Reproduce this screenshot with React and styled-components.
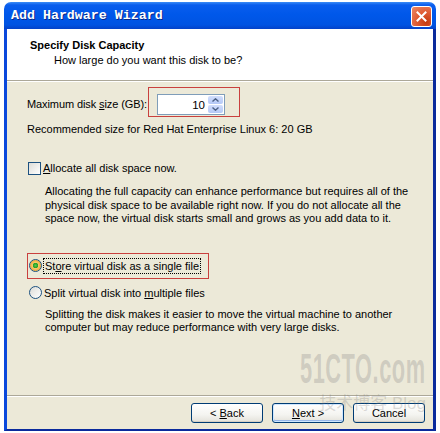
import React from 'react'
import styled, { createGlobalStyle } from 'styled-components'

const GlobalStyle = createGlobalStyle`
    html, body {
        margin: 0;
        padding: 0;
        background: #fff;
    }
    body {
        font-family: "Liberation Sans", Arial, sans-serif;
        font-size: 11px;
        color: #000;
    }
`

const Page = styled.div`
    position: relative;
    width: 440px;
    height: 433px;
    padding: 2px 0 0 4px;
    box-sizing: border-box;
    overflow: hidden;
`
const Window = styled.div`
    width: 432px;
    height: 429px;
    display: flex;
    flex-direction: column;
`
const TitleBar = styled.div`
    height: 27px;
    flex: none;
    display: flex;
    align-items: center;
    justify-content: space-between;
    padding: 0 4px 0 7px;
    border-radius: 7px 7px 0 0;
    background: linear-gradient(#3b8cf6 0, #0a5ded 3px, #0058ea 45%, #0053e2 85%, #0442c8 100%);
`
const Title = styled.span`
    font-family: "Liberation Mono", "DejaVu Sans Mono", monospace;
    font-weight: 700;
    font-size: 13.3px;
    color: #fff;
    text-shadow: 1px 1px 0 #0b2a8a;
`
const CloseButton = styled.div`
    width: 21px;
    height: 21px;
    margin-top: 2px;
    box-sizing: border-box;
    border: 1px solid #fff;
    border-radius: 3px;
    display: flex;
    align-items: center;
    justify-content: center;
    background: radial-gradient(circle at 75% 80%, #c43a10 0, #de5a32 45%, #ec8a68 100%);
`
const Frame = styled.div`
    flex: 1;
    display: flex;
    flex-direction: column;
    background: #ece9d8;
    border-left: 3px solid #0a48dc;
    border-right: 3px solid #0a2a9c;
    border-bottom: 2px solid #0a2a9c;
`
const Header = styled.div`
    height: 52px;
    flex: none;
    background: #fff;
    border-bottom: 1px solid #aca899;
    box-shadow: 0 1px 0 #fff;
    padding: 9px 0 0 23px;
    box-sizing: border-box;
`
const HeaderTitle = styled.div`
    font-weight: 700;
    line-height: 14px;
`
const HeaderSub = styled.div`
    line-height: 14px;
    margin-top: 1px;
    padding-left: 24px;
`
const Body = styled.div`
    flex: 1;
    display: flex;
    flex-direction: column;
    align-items: flex-start;
    padding: 6px 0 0 20px;
`
const SizeRow = styled.div`
    display: flex;
    align-items: flex-end;
    height: 30px;
`
const Label = styled.span`
    flex: none;
    width: 121px;
    white-space: nowrap;
    letter-spacing: -0.1px;
    line-height: 21px;
    margin-bottom: 2px;
`
const Highlight = styled.div`
    display: flex;
    align-items: ${p => p.align || 'center'};
    box-sizing: border-box;
    height: ${p => p.h}px;
    padding: ${p => p.pad};
    margin-top: ${p => p.mt || 0}px;
    border: 1px solid #c9403e;
`
const SpinBox = styled.div`
    width: 68px;
    height: 21px;
    box-sizing: border-box;
    border: 1px solid #7f9db9;
    background: #fff;
    display: flex;
    align-items: center;
    justify-content: flex-end;
    padding: 1px;
`
const SpinValue = styled.span`
    margin-right: 3px;
    font-size: 11.5px;
`
const SpinButtons = styled.div`
    width: 15px;
    height: 17px;
    display: flex;
    flex-direction: column;
    gap: 1px;
`
const SpinBtn = styled.div`
    flex: 1;
    border-radius: 2px;
    background: linear-gradient(#d2defc, #b4c8f6);
    display: flex;
    align-items: center;
    justify-content: center;
`
const Line = styled.div`
    line-height: ${p => p.lh || 14}px;
    margin-top: ${p => p.mt || 0}px;
    padding-left: ${p => p.indent || 0}px;
`
const OptionRow = styled.div`
    display: flex;
    align-items: center;
    gap: 2px;
    height: 14px;
    margin-top: ${p => p.mt || 0}px;
    margin-left: ${p => p.ml || 1}px;
`
const CheckBox = styled.span`
    width: 13px;
    height: 13px;
    box-sizing: border-box;
    border: 1px solid #1c5180;
    background: linear-gradient(135deg, #dcdcd7, #fff);
`
const Radio = styled.span`
    width: 13px;
    height: 13px;
    box-sizing: border-box;
    border-radius: 50%;
    border: 1px solid #1c5180;
    background: ${p => p.checked
        ? 'radial-gradient(circle, #5ec24c 0, #21a121 2.5px, #f9c76b 3px, #f0b040 5px, #fde9b4 6px)'
        : 'linear-gradient(135deg, #dcdcd7, #fff)'};
`
const Focus = styled.span`
    outline: 1px dotted #000;
    padding: 0 1px;
    margin-left: 2px;
    line-height: 14px;
`
const Footer = styled.div`
    flex: none;
    display: flex;
    justify-content: flex-end;
    gap: 9px;
    padding: 7px 8px 6px;
    border-top: 1px solid #aca899;
    box-shadow: inset 0 1px 0 #fff;
`
const Button = styled.div`
    width: 72px;
    height: 20px;
    box-sizing: border-box;
    border: 1px solid #003c74;
    border-radius: 3px;
    background: linear-gradient(#fff, #f4f4f0 60%, #e3e2da);
    box-shadow: ${p => p.primary
        ? 'inset 0 0 0 1px #cee7ff, inset 0 -1px 0 1px #98b8ea'
        : 'inset 0 -1px 0 #d6d0c5'};
    display: flex;
    align-items: center;
    justify-content: center;
    white-space: pre;
`
const Watermark = styled.div`
    position: absolute;
    right: 14px;
    top: 347px;
    display: flex;
    flex-direction: column;
    align-items: flex-end;
    color: rgba(120, 120, 120, 0.26);
    pointer-events: none;
`
const MarkBig = styled.div`
    font-family: "Liberation Sans", Arial, sans-serif;
    font-weight: 700;
    font-size: 42px;
    line-height: 44px;
    transform: scaleX(0.52);
    transform-origin: right center;
    letter-spacing: 1px;
`
const MarkSmall = styled.div`
    font-family: "Liberation Sans", "Noto Sans CJK SC", sans-serif;
    font-size: 17px;
    line-height: 22px;
    margin-top: 2px;
`

const Chevron = ({ up }) => (
    <svg width="7" height="4" viewBox="0 0 7 4">
        <path d={up ? 'M0.5 3.5 L3.5 0.8 L6.5 3.5' : 'M0.5 0.5 L3.5 3.2 L6.5 0.5'} fill="none" stroke="#4d6185" strokeWidth="1.4" />
    </svg>
)

const App = () => {
    return (
        <Page>
            <GlobalStyle />
            <Window>
                <TitleBar>
                    <Title>Add Hardware Wizard</Title>
                    <CloseButton>
                        <svg width="11" height="11" viewBox="0 0 11 11">
                            <path d="M1.5 1.5 L9.5 9.5 M9.5 1.5 L1.5 9.5" stroke="#fff" strokeWidth="2" strokeLinecap="square" />
                        </svg>
                    </CloseButton>
                </TitleBar>
                <Frame>
                    <Header>
                        <HeaderTitle>Specify Disk Capacity</HeaderTitle>
                        <HeaderSub>How large do you want this disk to be?</HeaderSub>
                    </Header>
                    <Body>
                        <SizeRow>
                            <Label>Maximum disk <u>s</u>ize (GB):</Label>
                            <Highlight h={30} align="flex-end" pad="0 14px 1px 8px">
                                <SpinBox>
                                    <SpinValue>10</SpinValue>
                                    <SpinButtons>
                                        <SpinBtn><Chevron up /></SpinBtn>
                                        <SpinBtn><Chevron /></SpinBtn>
                                    </SpinButtons>
                                </SpinBox>
                            </Highlight>
                        </SizeRow>
                        <Line mt={5}>Recommended size for Red Hat Enterprise Linux 6: 20 GB</Line>

                        <OptionRow mt={25}>
                            <CheckBox />
                            <span><u>A</u>llocate all disk space now.</span>
                        </OptionRow>
                        <Line mt={10} lh={13.5} indent={18}>
                            Allocating the full capacity can enhance performance but requires all of the<br />
                            physical disk space to be available right now. If you do not allocate all the<br />
                            space now, the virtual disk starts small and grows as you add data to it.
                        </Line>

                        <Highlight h={26} pad="0 8px 0 1px" mt={27}>
                            <Radio checked />
                            <Focus>St<u>o</u>re virtual disk as a single file</Focus>
                        </Highlight>
                        <OptionRow mt={7} ml={2}>
                            <Radio />
                            <span>Split virtual disk into <u>m</u>ultiple files</span>
                        </OptionRow>
                        <Line mt={8} lh={13.5} indent={18}>
                            Splitting the disk makes it easier to move the virtual machine to another<br />
                            computer but may reduce performance with very large disks.
                        </Line>
                    </Body>
                    <Footer>
                        <Button>{'< '}<u>B</u>ack</Button>
                        <Button primary><u>N</u>ext{' >'}</Button>
                        <Button>Cancel</Button>
                    </Footer>
                </Frame>
            </Window>
            <Watermark>
                <MarkBig>51CTO.com</MarkBig>
                <MarkSmall>技术博客 Blog</MarkSmall>
            </Watermark>
        </Page>
    )
}

export default App
